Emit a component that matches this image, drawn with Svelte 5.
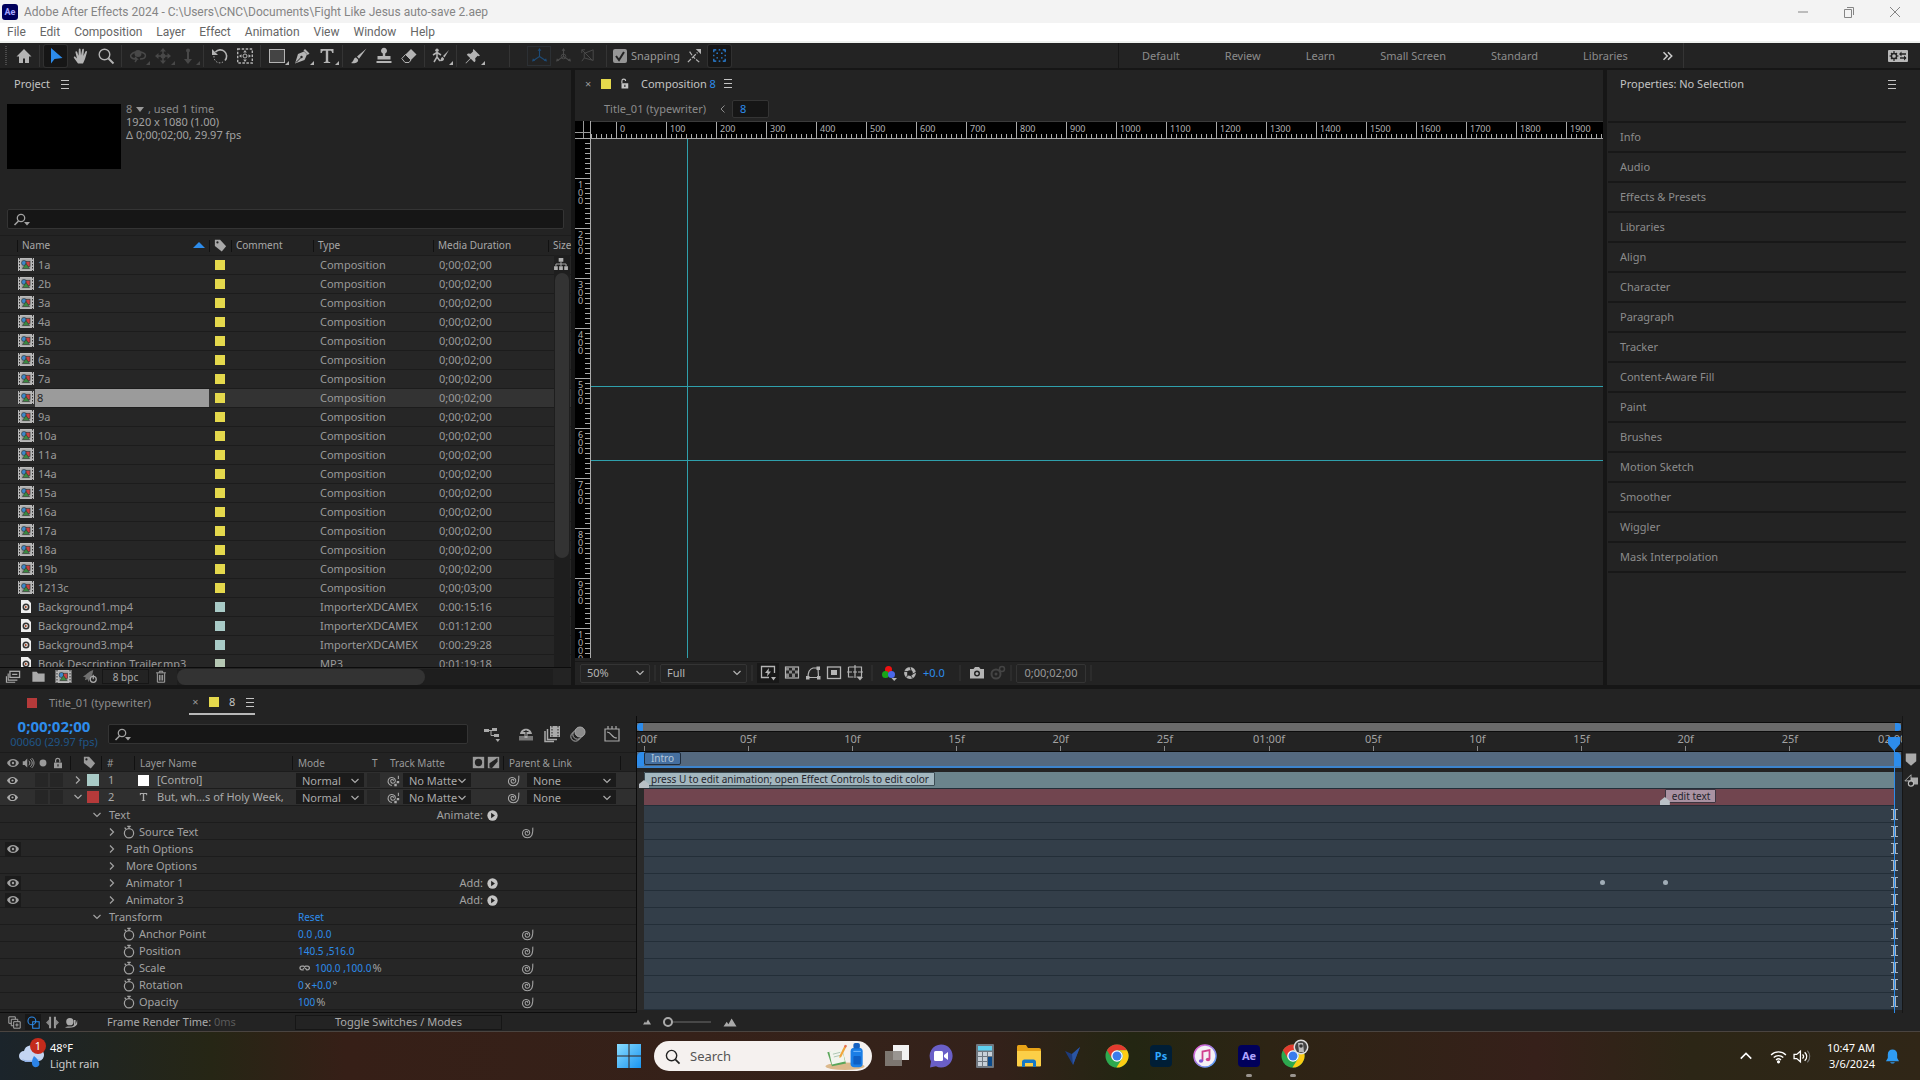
<script>
  const menus = ["File", "Edit", "Composition", "Layer", "Effect", "Animation", "View", "Window", "Help"];

  const toolGroups = [
    [{ id: "home" }],
    [{ id: "selection" }, { id: "hand" }, { id: "zoom" }],
    [
      { id: "orbit", off: true, more: true },
      { id: "pan", off: true, more: true },
      { id: "dolly", off: true, more: true },
    ],
    [{ id: "rotate" }, { id: "anchor" }],
    [{ id: "shape", more: true }, { id: "pen", more: true }, { id: "type", more: true }],
    [{ id: "brush" }, { id: "stamp" }, { id: "eraser" }],
    [{ id: "roto", more: true }],
    [{ id: "pin", more: true }],
  ];

  const workspaces = ["Default", "Review", "Learn", "Small Screen", "Standard", "Libraries"];

  const comp = (name, duration = "0;00;02;00") => ({ name, icon: "comp", label: "yellow", type: "Composition", duration });
  const clip = (name, duration) => ({ name, icon: "file", label: "aqua", type: "ImporterXDCAMEX", duration });

  const items = [
    comp("1a"), comp("2b"), comp("3a"), comp("4a"), comp("5b"), comp("6a"), comp("7a"), comp("8"), comp("9a"),
    comp("10a"), comp("11a"), comp("14a"), comp("15a"), comp("16a"), comp("17a"), comp("18a"), comp("19b"),
    comp("1213c", "0;00;03;00"),
    clip("Background1.mp4", "0:00:15:16"),
    clip("Background2.mp4", "0:01:12:00"),
    clip("Background3.mp4", "0:00:29:28"),
    { name: "Book Description Trailer.mp3", icon: "file", label: "sage", type: "MP3", duration: "0:01:19:18" },
  ];

  const rulerX = Array.from({ length: 20 }, (_, i) => i * 100);
  const rulerY = Array.from({ length: 10 }, (_, i) => (i + 1) * 100);

  const panels = [
    "Info", "Audio", "Effects & Presets", "Libraries", "Align", "Character", "Paragraph", "Tracker",
    "Content-Aware Fill", "Paint", "Brushes", "Motion Sketch", "Smoother", "Wiggler", "Mask Interpolation",
  ];

  const layers = [
    { num: 1, name: "[Control]", color: "aqua", kind: "solid" },
    { num: 2, name: "But, wh...s of Holy Week,", color: "red", kind: "text", open: true },
  ];

  const props = [
    { name: "Text", level: 0, arrow: "down", action: "Animate:" },
    { name: "Source Text", level: 1, arrow: "right", watch: true, whip: true },
    { name: "Path Options", level: 1, arrow: "right", eye: true },
    { name: "More Options", level: 1, arrow: "right" },
    { name: "Animator 1", level: 1, arrow: "right", eye: true, action: "Add:", keys: [46, 49] },
    { name: "Animator 3", level: 1, arrow: "right", eye: true, action: "Add:" },
    { name: "Transform", level: 0, arrow: "down", value: ["Reset"] },
    { name: "Anchor Point", level: 1, watch: true, whip: true, value: ["0.0 ,0.0"] },
    { name: "Position", level: 1, watch: true, whip: true, value: ["140.5 ,516.0"] },
    { name: "Scale", level: 1, watch: true, whip: true, link: true, value: ["100.0 ,100.0", "%"] },
    { name: "Rotation", level: 1, watch: true, whip: true, value: ["0", "x", "+0.0", "°"] },
    { name: "Opacity", level: 1, watch: true, whip: true, value: ["100", "%"] },
  ];

  const totalFrames = 60;
  const ticks = ["0:00f", "05f", "10f", "15f", "20f", "25f", "01:00f", "05f", "10f", "15f", "20f", "25f", "02:00f"];
  const at = (frame) => `left: ${(frame / totalFrames) * 100}%`;

  const apps = ["taskview", "chat", "calc", "explorer", "vectornator", "chrome", "ps", "itunes", "ae", "chromeUser"];
  const running = ["ae", "chromeUser"];

  const chromeLogo = `<circle cx="12" cy="12" r="11.5" fill="#2da94f"/><path d="M2 6.3A11.5 11.5 0 0 1 22 6.3H12L7 14.5Z" fill="#e33b2e"/><path d="M22 6.3A11.5 11.5 0 0 1 11.4 23.5L17 14.8A6 6 0 0 0 16 7.5L14 6.3Z" fill="#fdcc14"/><circle cx="12" cy="12" r="5.8" fill="#fff"/><circle cx="12" cy="12" r="4.5" fill="#3a7cec"/>`;

  const icons = {
    home: `<path d="M8 1 0.5 8.5H3V15h4v-4.5h2V15h4V8.5h2.5Z" fill="currentColor"/>`,
    selection: `<path d="M3 0v15.5l3.5-4.5 8-1Z" fill="#2d8ceb"/>`,
    hand: `<path d="M5 15.5 1 10c-.8-1.2.7-2 1.5-1L4 10.5 2.5 4.5c-.2-1.4 1.3-1.6 1.7-.4l1.3 3.6L5.8 1.5c.1-1.4 1.7-1.3 1.8 0l.4 6L9.2 1.6c.3-1.3 1.8-1 1.7.3l-.5 6 1.9-4.2c.6-1.2 2-.6 1.6.7L12 11l-2 4.5Z" fill="currentColor"/>`,
    zoom: `<circle cx="6.5" cy="6.5" r="5.3" fill="none" stroke="currentColor" stroke-width="1.4"/><path d="m10.5 10.5 5 5" stroke="currentColor" stroke-width="2"/>`,
    orbit: `<circle cx="8" cy="5.5" r="3.5" fill="currentColor"/><path d="M5 4C-2 7 0 11 7 11l-2-2m2 2-2 3M11 4c7 2 5 7-1 7" fill="none" stroke="currentColor" stroke-width="1.5"/>`,
    pan: `<path d="M8 1v14M1 8h14" stroke="currentColor" stroke-width="1.5"/><path d="m8 0 3 3.5H5ZM8 16l3-3.5H5ZM0 8l3.5-3v6ZM16 8l-3.5-3v6Z" fill="currentColor"/><circle cx="8" cy="8" r="2.5" fill="currentColor"/>`,
    dolly: `<path d="M8 1v12" stroke="currentColor" stroke-width="2"/><path d="m8 16 4-5H4Z" fill="currentColor"/><circle cx="8" cy="2.5" r="2" fill="currentColor"/>`,
    rotate: `<path d="M3.5 4a6.3 6.3 0 1 1 9.5 8.5" fill="none" stroke="currentColor" stroke-width="1.6"/><path d="M2 8a6 6 0 0 0 9 6" fill="none" stroke="currentColor" stroke-dasharray="1.5 1.5"/><path d="M0 1v6h6Z" fill="currentColor"/>`,
    anchor: `<rect x="0.7" y="1" width="14.6" height="14" fill="none" stroke="currentColor" stroke-width="1.4" stroke-dasharray="2.5 1.5"/><circle cx="8" cy="8" r="2" fill="none" stroke="currentColor"/><path d="m8 2 1.8 2.5H6.2ZM8 14l1.8-2.5H6.2ZM2 8l2.5-1.8v3.6ZM14 8l-2.5-1.8v3.6Z" fill="currentColor"/>`,
    shape: `<rect x="0.5" y="1.5" width="15" height="13" fill="#444" stroke="currentColor"/>`,
    pen: `<path d="M1 15.5 4 6l6-2.5 3 3L10.5 12Z" fill="currentColor"/><path d="m11 1 4.5 4.5-1.8 1.5L9.5 2.5Z" fill="currentColor"/><path d="m2 14.5 5-5" stroke="#232323"/><circle cx="7.5" cy="9" r="1.2" fill="#232323"/>`,
    type: `<path d="M1.5 1h13v4h-1.3c-.3-1.8-.8-2.3-2.2-2.3H9.2v10c0 1 .6 1.3 2 1.4v.9H4.8v-.9c1.4-.1 2-.4 2-1.4v-10H5c-1.4 0-1.9.5-2.2 2.3H1.5Z" fill="currentColor"/>`,
    brush: `<path d="M15.5.5 6 8.5l2 2.2ZM5 9.500C2 10 3.5 13 0 15c3.5 1 8-.5 7-3.5Z" fill="currentColor"/>`,
    stamp: `<path d="M6.8 8V5.5a3 3 0 1 1 2.4 0V8h5.3v3.5h-13V8ZM0.5 13h15v2H.5Z" fill="currentColor"/>`,
    eraser: `<path d="M10 1 15.5 6.5 10 12 4.5 6.5Z" fill="currentColor"/><path d="M4.5 6.5 10 12l-2 2.5H4L.8 10.5Z" fill="none" stroke="currentColor"/>`,
    roto: `<circle cx="4" cy="2.2" r="1.7" fill="currentColor"/><path d="M4 4v5L1 14M4 9l3 4M0 7l4-2.5L8 7" fill="none" stroke="currentColor" stroke-width="1.5"/><path d="M16 2 10 8l1.5 1.5ZM9.5 9c-2 .5-1 2.5-3 4 2.5.5 5-.5 4.5-2.5Z" fill="currentColor"/>`,
    pin: `<path d="M8.5 1 15 7.5l-1.5.7-.8-.4-2.5 2.5.3 2.7-1.2 1.2L5.8 10.7 1 15.5.5 15l4.8-4.8L1.8 6.7 3 5.5l2.7.3 2.5-2.5-.4-.8Z" fill="currentColor"/>`,
    axis: `<path d="M8 2v7l-6 4M8 9l6 4" fill="none" stroke="currentColor" stroke-width="1.2"/><path d="m8 0 2 3H6ZM0 14.5l1-3.5 2.5 2.5ZM16 14.5l-1-3.5-2.5 2.5Z" fill="currentColor"/>`,
    axisWorld: `<path d="M8 2v7l-6 4M8 9l6 4" fill="none" stroke="currentColor" stroke-width="1.2"/><circle cx="8" cy="9" r="2.5" fill="none" stroke="currentColor"/><path d="m8 0 2 3H6ZM0 14.5l1-3.5 2.5 2.5ZM16 14.5l-1-3.5-2.5 2.5Z" fill="currentColor"/>`,
    axisView: `<path d="M1 1l13 13M5 5l10-4v13L4 11V5M1 1v4M1 1h4M1 15l3-4" fill="none" stroke="currentColor" stroke-width="1.2"/>`,
    snapEdge: `<path d="m1 15 6-6 7 6M3 3l4 6 5-5" fill="none" stroke="currentColor" stroke-width="1.4" stroke-dasharray="5 1.5"/><path d="M10 0h6v6Z" fill="currentColor"/>`,
    snapBox: `<path d="M1 4V1h3M12 1h3v3M15 12v3h-3M4 15H1v-3M7 1h2M7 15h2M1 7v2M15 7v2M5 6V5h1M10 5h1v1M11 10v1h-1M6 11H5v-1" fill="none" stroke="#2d8ceb" stroke-width="1.4"/>`,
    chevrons: `<path d="m2 3 5 5-5 5M8 3l5 5-5 5" fill="none" stroke="#ccc" stroke-width="2"/>`,
    settings: `<rect width="20" height="12" rx="1" fill="#b8b8b8"/><circle cx="6" cy="6" r="2.6" fill="none" stroke="#232323" stroke-width="1.5"/><path d="M6 1v2M6 9v2M1.5 6h2M8.5 6h2M3 3l1 1M9 3 8 4M3 9l1-1M9 9 8 8" stroke="#232323" stroke-width="1.2"/><path d="M12 4h6M12 8h6" stroke="#232323" stroke-width="1.3"/><path d="m13.5 1.5-2.5 2.5 2.5 2.5ZM16 5.5 18.5 8 16 10.5Z" fill="#232323"/>`,
    menu: `<path d="M1 1.5h8M1 5.5h8M1 9.5h8" stroke="currentColor"/>`,
    search: `<circle cx="7" cy="5" r="3.7" fill="none" stroke="currentColor" stroke-width="1.3"/><path d="M4.5 8 0.5 12" stroke="currentColor" stroke-width="1.6"/><path d="M10 9h6l-3 3.5Z" fill="currentColor"/>`,
    tag: `<path d="M1 1h6l7 7.5L9 14.5 1 8Z" fill="currentColor"/><circle cx="4" cy="4" r="1.3" fill="#232323"/>`,
    sort: `<path d="M0 6 6 0l6 6Z" fill="#2d8ceb"/>`,
    flowchart: `<path d="M5 0h5v4H5ZM0 9h4v4H0ZM5.5 9h4v4h-4ZM11 9h4v4h-4Z" fill="currentColor"/><path d="M7.5 4v5M2 9V6.5h11V9" fill="none" stroke="currentColor"/>`,
    comp: `<rect width="16" height="13" fill="#b9b9b9"/><path d="M1.5 0v13M14.5 0v13" stroke="#333" stroke-dasharray="1.5 1.5"/><rect x="3.5" y="1.5" width="9" height="10" fill="#a0a0a0"/><circle cx="6" cy="5" r="2.5" fill="#3c87c8" stroke="#333" stroke-width=".6"/><rect x="8" y="3.5" width="4" height="5" fill="#c94141" stroke="#333" stroke-width=".6"/><path d="m8 5.5 3.5 5h-7Z" fill="#3c8a42" stroke="#333" stroke-width=".6"/>`,
    file: `<path d="M3 0h7l3 3v10H3Z" fill="#eee"/><circle cx="8" cy="7" r="2.7" fill="none" stroke="#333" stroke-width="1.6"/><path d="m7 5.5 2.5 1.5L7 8.5Z" fill="#a34b2a"/>`,
    interpret: `<rect x="4.5" y="1.5" width="11" height="7" fill="none" stroke="currentColor" stroke-width="1.5"/><path d="M2.5 4v7.5H13M.5 7v7h10M7 5h6" fill="none" stroke="currentColor" stroke-width="1.3"/>`,
    folder: `<path d="M1 2h5l1.5 2H15v9.5H1Z" fill="currentColor"/>`,
    rocket: `<path d="M12 1C6 3 5 6 1 8l3 1-1 3 3-1 1 3c1-4 4-5 5-13Z" fill="#707070"/><circle cx="12" cy="11" r="3.2" fill="none" stroke="#aaa" stroke-width="1.3"/><path d="M12 6v5" stroke="#aaa" stroke-width="1.3"/>`,
    trash: `<path d="M2 3.5h12M6 3V1.5h4V3M3.5 4v11h9V4M6 6v7M8 6v7M10 6v7" fill="none" stroke="currentColor" stroke-width="1.2"/>`,
    lock: `<path d="M3 7V4a2.7 2.7 0 0 1 5.3 0v3" fill="none" stroke="currentColor" stroke-width="1.5"/><path d="M1 7h10v7H1Z" fill="currentColor"/><path d="M6 9v3" stroke="#232323" stroke-width="1.5"/>`,
    unlock: `<path d="M2.5 7V4a2.5 2.5 0 0 1 5 0" fill="none" stroke="currentColor" stroke-width="1.5"/><path d="M2 7h9v7H2Z" fill="currentColor"/><path d="M6.5 9v3" stroke="#232323" stroke-width="1.5"/>`,
    back: `<path d="M5.5 1.5 2 5l3.5 3.5" fill="none" stroke="currentColor"/>`,
    down: `<path d="M1.5 3 5 6.5 8.5 3" fill="none" stroke="currentColor" stroke-width="1.2"/>`,
    right: `<path d="M3 1.5 6.5 5 3 8.5" fill="none" stroke="currentColor" stroke-width="1.2"/>`,
    fastPreview: `<path d="M14.5 8V1.5h-13v11H9" fill="none" stroke="currentColor" stroke-width="1.3"/><path d="M9 3 5 8h2.5L7 11.5l4-5H8.5ZM11 12h5l-2.5 3.5Z" fill="currentColor"/>`,
    checker: `<rect x="1.5" y="2" width="13" height="11" fill="none" stroke="currentColor" stroke-width="1.2"/><path d="M2 2.5h3v3H2Zm6 0h3v3H8Zm-3 3h3v3H5Zm6 0h3v3h-3Zm-9 3h3v4H2Zm6 0h3v4H8Z" fill="#888"/>`,
    maskPath: `<path d="M3 12.5h10.5L13 3H8C4 4 3 8 3 12.5Z" fill="none" stroke="currentColor" stroke-width="1.2"/><path d="M1 11h3.5v3.5H1ZM12 11h3.5v3.5H12ZM11.5 1.5H15V5h-3.5Z" fill="currentColor"/>`,
    region: `<rect x="1.5" y="2" width="13" height="11.5" fill="none" stroke="currentColor" stroke-width="1.3"/><path d="M5 5h6v5H5Z" fill="currentColor"/>`,
    gridGuides: `<path d="M1.5 2h13v10h-5M1.5 2v10h5M8 0v13M0 7h5M11 7h5M6 7h4" fill="none" stroke="currentColor" stroke-width="1.2"/><path d="M10 12h6l-3 3.5Z" fill="currentColor"/>`,
    channels: `<circle cx="7.5" cy="4.5" r="3.5" fill="#e11"/><circle cx="4.5" cy="9.5" r="3.5" fill="#19a519"/><circle cx="10.5" cy="9.5" r="3.5" fill="#4a67e8"/><path d="M10.5 13H16l-2.8 3Z" fill="currentColor"/>`,
    shutter: `<circle cx="8" cy="8" r="5" fill="none" stroke="currentColor" stroke-width="3.5"/><path d="m8 1 1.5 5M15 7l-4.5 2.5M11 14l-3-4M4 13l2-4.5M1 6l5 .5" stroke="#232323"/>`,
    camera: `<path d="M1 4h3.5L6 2h4l1.5 2H15v9.5H1Z" fill="currentColor"/><circle cx="8" cy="8.5" r="3" fill="#232323"/><circle cx="8" cy="8.5" r="1.5" fill="currentColor"/>`,
    cameraOff: `<circle cx="6" cy="9" r="4.5" fill="none" stroke="#444" stroke-width="2"/><circle cx="6" cy="9" r="1.5" fill="#444"/><circle cx="12" cy="4" r="2.5" fill="none" stroke="#444" stroke-width="1.5"/>`,
    miniFlow: `<path d="M0 3h5v3H0ZM8 2h5v3H8ZM10 8h5v3h-5Z" fill="currentColor"/><path d="M5 4.5h3M7 4.5v5h3" fill="none" stroke="currentColor"/><path d="M11.5 13H16l-2.2 3Z" fill="currentColor"/>`,
    shy: `<path d="M1 10h14v4.5H1Z" fill="#777"/><path d="M2 8C3 1 13 1 14 8H9.5v4h-3V8Z" fill="currentColor"/><path d="M5.5 5.5h5M8 4v6" stroke="#232323"/>`,
    frameBlend: `<path d="M6 0h10v11H6Z" fill="currentColor"/><path d="M3.5 3v10.5H13M1 5v10.5h9" fill="none" stroke="currentColor" stroke-width="1.5"/><path d="M8 0v11M14 0v11" stroke="#232323" stroke-dasharray="1.5 1.5"/>`,
    motionBlur: `<circle cx="5.5" cy="10.5" r="4.7" fill="none" stroke="currentColor"/><circle cx="7.5" cy="8.5" r="4.7" fill="#232323" stroke="currentColor"/><circle cx="10" cy="6" r="5" fill="#8c8c8c" stroke="currentColor"/>`,
    graph: `<path d="M1 3h14v12H1ZM4 3V0M8 3V0M12 3V0" fill="none" stroke="currentColor" stroke-width="1.2"/><path d="M3 6c5 0 4 6 10 6" fill="none" stroke="currentColor" stroke-width="1.2"/>`,
    eye: `<path d="M0 8c3-7 13-7 16 0-3 7-13 7-16 0Z" fill="currentColor"/><circle cx="8" cy="8" r="3.8" fill="#232323"/><circle cx="8" cy="8" r="1.6" fill="currentColor"/>`,
    speaker: `<path d="M1 5.5h2.5L7 2v12L3.5 10.5H1Z" fill="currentColor"/><path d="M9 5c2 2 2 4 0 6M11 3c3.5 3 3.5 7 0 10M13 1.5c4 4 4 9 0 13" fill="none" stroke="currentColor" stroke-width="1.3"/>`,
    dot: `<circle cx="8" cy="8" r="5.5" fill="currentColor"/>`,
    matteAlpha: `<path d="M1 1h14v14H1Z" fill="currentColor"/><circle cx="8" cy="8" r="4.5" fill="#232323"/>`,
    matteLuma: `<path d="M1 1h14v14H1Z" fill="currentColor"/><path d="M13 2v5L6 15l-3-1V9Z" fill="#232323"/>`,
    whip: `<path d="M7.8 8.5c1.5-1-.3-3-2-1.5s-.3 4.5 2 4.5 4-3 2.2-5.5S3.5 3.5 2.2 7s.8 7.5 5.6 7.5S15 11 14.5 2" fill="none" stroke="currentColor" stroke-width="1.3"/>`,
    whipMatte: `<path d="M7.3 8.5c1.5-1-.3-3-2-1.5s-.3 4.5 2 4.5 4-3 2.2-5.5S3 3.5 1.7 7s.8 6.5 4.3 7.2M14 2v4" fill="none" stroke="currentColor" stroke-width="1.3"/><path d="M9 12h3v3H9ZM12 8.5h3v3h-3Z" fill="currentColor"/>`,
    watch: `<circle cx="8" cy="9.5" r="5.3" fill="none" stroke="currentColor" stroke-width="1.4"/><path d="M6 1.5h4M8 1v3M3 3l1.5 1.5" stroke="currentColor" stroke-width="1.5"/>`,
    play: `<circle cx="8" cy="8" r="7.5" fill="#c4c4c4"/><path d="m6 4 5.5 4L6 12Z" fill="#232323"/>`,
    link: `<path d="M7 10.5H4.5a2.5 2.5 0 0 1 0-5H7l4 5h1a2.5 2.5 0 0 0 0-5H9.5L6 9" fill="none" stroke="currentColor" stroke-width="1.8"/>`,
    markerBin: `<path d="M2 1h12v9l-6 5-6-5Z" fill="#aaa"/>`,
    compButton: `<path d="M6 5h10v8H7Z" fill="#aaa"/><path d="m1 9 7-7v7Z" fill="#232323" stroke="#bbb"/><circle cx="8" cy="12" r="3" fill="#232323" stroke="#bbb" stroke-width="1.3"/>`,
    expand: `<path d="M1 1h8v3M1 1v8h3M4 4h8v3M4 4v8h3" fill="none" stroke="currentColor" stroke-width="1.2"/><path d="M7 7h8v8H7ZM9 11h4M11 9v4" fill="none" stroke="currentColor" stroke-width="1.2"/>`,
    modes: `<circle cx="6" cy="6" r="4.8" fill="none" stroke="#2d8ceb" stroke-width="1.3"/><path d="M7 7h8v8H7Z" fill="none" stroke="#2d8ceb" stroke-width="1.3"/>`,
    inout: `<path d="M5 1v14M11 1v14" stroke="#999" stroke-width="2.5"/><path d="m0 8 4-4v8ZM16 8l-4-4v8Z" fill="#888"/>`,
    snail: `<circle cx="6" cy="7" r="4.5" fill="#aaa"/><path d="M0 14c5-3 8 1 11-3V5h2v5l2-5v5c-2 4-8 5-15 4Z" fill="#aaa"/>`,
    hills: `<path d="m0 13 4-6 2 3 4-7 6 10Z" fill="currentColor"/>`,
    windows: `<defs><linearGradient id="w" x2="1" y2="1"><stop stop-color="#8adcff"/><stop offset="1" stop-color="#1a95f0"/></linearGradient></defs><path d="M0 0h11.5v11.5H0ZM12.5 0H24v11.5H12.5ZM0 12.5h11.5V24H0ZM12.5 12.5H24V24H12.5Z" fill="url(#w)"/>`,
    lens: `<circle cx="7" cy="7" r="5.5" fill="none" stroke="#222" stroke-width="1.5"/><path d="m11 11 4.5 4.5" stroke="#222" stroke-width="1.8"/>`,
    doodle: `<ellipse cx="22" cy="25" rx="21" ry="4" fill="#dcb98c"/><path d="m3 10 16-3 4 15-15 3Z" fill="#5aa65a"/><path d="m5 9 14-3 3 14-14 3Z" fill="#f2f5ee"/><path d="m9 12 8-2M10 15l8-2" stroke="#a9c4b0"/><path d="m22 2 2 1-6 12-2 1v-2Z" fill="#f0a63c"/><path d="m22 2 2 1-1 2-2-1Z" fill="#e36a5c"/><rect x="28" y="5" width="13" height="21" rx="4" fill="#1b7ee6"/><rect x="31" y="0" width="7" height="6" rx="2" fill="#1560c0"/><rect x="31" y="14" width="8" height="9" rx="1" fill="#0f5fc4"/><path d="M31 9h8" stroke="#7ec0ff"/>`,
    taskview: `<rect x="8" y="1" width="16" height="15" fill="#f2f2f2"/><rect x="0" y="7" width="17" height="15" fill="#8a8580" opacity=".85"/>`,
    chat: `<path d="M12 .5a11.5 11.5 0 1 1-5 21.8L1 23.5l1-6A11.5 11.5 0 0 1 12 .5Z" fill="#6a5fc7"/><rect x="5" y="7" width="9" height="10" rx="1.5" fill="#fff"/><path d="m15 11 4-3v8l-4-3Z" fill="#fff"/>`,
    calc: `<rect x="3" width="18" height="24" rx="1" fill="#6f7780"/><rect x="5" y="2" width="14" height="4.5" fill="#5fd0f0"/><path d="M5 8h4v4H5ZM10 8h4v4h-4ZM15 8h4v4h-4ZM5 13h4v4H5ZM10 13h4v4h-4ZM5 18h4v4H5ZM10 18h4v4h-4Z" fill="#c8d0d8"/><path d="M15 13h4v9h-4Z" fill="#0a4a8c"/>`,
    explorer: `<path d="M0 3c0-1.2.5-2 1.5-2H9l2 3h11c1.2 0 2 .8 2 2v16H0Z" fill="#e8a317"/><path d="M0 7h24v14c0 1-.5 1.5-1.5 1.5h-21C.5 22.5 0 22 0 21Z" fill="#fccf47"/><path d="M5 23v-5c0-1.5 1-2.5 2.5-2.5h9c1.5 0 2.5 1 2.5 2.5v5h-3v-4H8v4Z" fill="#1679c6"/>`,
    vectornator: `<path d="m4 7 7 3 8-7-7 18Z" fill="#1d3b7c"/><path d="m11 10 8-7-7 18Z" fill="#2a55a4"/>`,
    chrome: chromeLogo,
    chromeUser: `${chromeLogo}<circle cx="20" cy="3" r="7.5" fill="#ddd"/><circle cx="20" cy="3" r="6" fill="#444"/><path d="M17-1h5l1 9h-5Z" fill="#bbb"/><circle cx="20" cy="2" r="1.8" fill="#333"/>`,
    itunes: `<defs><linearGradient id="it" x2="1" y2="1"><stop stop-color="#f05ad0"/><stop offset="1" stop-color="#4aa8ff"/></linearGradient></defs><circle cx="12" cy="12" r="11" fill="#f4f0f6" stroke="url(#it)" stroke-width="1.5"/><path d="M9.5 17V7.5l7-1.5v9" fill="none" stroke="#d1428f" stroke-width="1.8"/><ellipse cx="8" cy="17" rx="2.2" ry="1.8" fill="#7b55d8"/><ellipse cx="15" cy="15.5" rx="2.2" ry="1.8" fill="#d1428f"/>`,
    weather: `<path d="M5 18a5 5 0 0 1 0-10 7 7 0 0 1 13-2 6 6 0 0 1 2 12Z" fill="#c3d5f2"/><path d="M3 16c4 2 12 2 18 0-2 2-4 3-6 3H6Z" fill="#8fb0e6"/><path d="M15 13c6 5 7 9 3 11-5 1-7-4-3-11Z" fill="#2b83e8"/>`,
    up: `<path d="m2 11 6-6 6 6" fill="none" stroke="#fff" stroke-width="1.8"/>`,
    wifi: `<path d="M1 6.5a10 10 0 0 1 14 0M3.5 9a6.5 6.5 0 0 1 9 0M5.7 11.3a3.3 3.3 0 0 1 4.6 0" fill="none" stroke="#fff" stroke-width="1.3"/><circle cx="8" cy="13" r="1.5" fill="#fff"/>`,
    volume: `<path d="M1 6h2.5L7 3v10l-3.5-3H1Z" fill="none" stroke="#fff" stroke-width="1.2"/><path d="M9 6c1.3 1.3 1.3 2.7 0 4M11 4c2.5 2.5 2.5 5.5 0 8" fill="none" stroke="#fff" stroke-width="1.2"/><path d="M13.5 2.5c3 3.5 3 7.5 0 11" fill="none" stroke="#777"/>`,
    bell: `<path d="M8 .5a5 5 0 0 1 5 5v4l2 3.5H1l2-3.5v-4a5 5 0 0 1 5-5ZM5.5 14h5c-.5 2-4.5 2-5 0Z" fill="#2f9bf2"/>`,
  };

  let tool = $state("selection");
  let snapping = $state(true);
  let workspace = $state("");
  let selected = $state("8");
</script>

{#snippet icon(name, w = 16, h = w, box = `0 0 16 16`)}
  <svg width={w} height={h} viewBox={box} aria-hidden="true">{@html icons[name]}</svg>
{/snippet}

{#snippet dropdown(kind, label, value)}
  <span class="dropdown {kind}">
    <select aria-label={label}><option>{value}</option></select>
    {@render icon("down", 10, 10, "0 0 10 10")}
  </span>
{/snippet}

<div class="app">
  <header class="titlebar">
    <span class="badge-ae">Ae</span>
    <span>Adobe After Effects 2024 - C:\Users\CNC\Documents\Fight Like Jesus auto-save 2.aep</span>
    <div class="window-buttons">
      <button aria-label="Minimize"><svg width="12" height="12"><path d="M1 6h10" /></svg></button>
      <button aria-label="Restore"><svg width="12" height="12"><path d="M1.5 3.5h7v8h-7ZM4 1.5h6.5V9" /></svg></button>
      <button aria-label="Close"><svg width="12" height="12"><path d="m1 1 10 10M11 1 1 11" /></svg></button>
    </div>
  </header>

  <nav class="menubar">
    {#each menus as menu}
      <button>{menu}</button>
    {/each}
  </nav>

  <div class="toolbar">
    <span class="grip"></span>
    {#each toolGroups as group, i}
      {#if i > 0}<span class="sep"></span>{/if}
      {#each group as t}
        <button
          class="tool"
          class:active={tool === t.id}
          class:off={t.off}
          class:more={t.more}
          aria-label={t.id}
          onclick={() => (tool = t.id)}
        >
          {@render icon(t.id)}
        </button>
      {/each}
    {/each}
    <span class="sep wide"></span>
    <div class="axes">
      <button class="axis on" aria-label="Local axis">{@render icon("axis", 15)}</button>
      <button class="axis" aria-label="World axis">{@render icon("axisWorld", 15)}</button>
      <button class="axis" aria-label="View axis">{@render icon("axisView", 13)}</button>
    </div>
    <span class="sep"></span>
    <label class="snapping"><input type="checkbox" bind:checked={snapping} />Snapping</label>
    <button class="tool" aria-label="Snap to edges">{@render icon("snapEdge", 14)}</button>
    <button class="tool active" aria-label="Snap to features">{@render icon("snapBox", 13)}</button>
    <nav class="workspaces">
      <div class="names">
        {#each workspaces as w}
          <button class:current={workspace === w} onclick={() => (workspace = w)}>{w}</button>
        {/each}
      </div>
      <button aria-label="More workspaces">{@render icon("chevrons", 12)}</button>
    </nav>
    <button class="settings" aria-label="Workspace settings">{@render icon("settings", 20, 12, "0 0 20 12")}</button>
  </div>

  <main class="panels">
    <section class="panel project">
      <div class="tab-row">Project <button aria-label="Panel menu">{@render icon("menu", 10, 11, "0 0 10 11")}</button></div>
      <div class="info">
        <div class="thumb"></div>
        <div>
          <p class="dim">8 <span class="caret"></span> , used 1 time</p>
          <p>1920 x 1080 (1.00)</p>
          <p>Δ 0;00;02;00, 29.97 fps</p>
        </div>
      </div>
      <div class="search">
        {@render icon("search", 16, 13, "0 0 16 13")}
        <input type="text" aria-label="Search project" />
      </div>
      <div class="list">
        <table>
          <thead>
            <tr>
              <th class="c-name"><span>Name {@render icon("sort", 12, 6, "0 0 12 6")}</span></th>
              <th class="c-label">{@render icon("tag", 13, 13, "0 0 15 15")}</th>
              <th class="c-comment">Comment</th>
              <th class="c-type">Type</th>
              <th class="c-duration">Media Duration</th>
              <th class="c-size">Size</th>
            </tr>
          </thead>
          <tbody>
            {#each items as item}
              <tr class:selected={selected === item.name} onclick={() => (selected = item.name)}>
                <td><span class="cell-name">{@render icon(item.icon, 16, 13, "0 0 16 13")}<b>{item.name}</b></span></td>
                <td><i class="swatch {item.label}"></i></td>
                <td></td>
                <td>{item.type}</td>
                <td>{item.duration}</td>
                <td></td>
              </tr>
            {/each}
          </tbody>
        </table>
        <div class="scroll-y">{@render icon("flowchart", 14, 12, "0 0 15 13")}<span></span></div>
      </div>
      <div class="project-foot">
        <button aria-label="Interpret footage">{@render icon("interpret", 18, 14)}</button>
        <button aria-label="New folder">{@render icon("folder", 15, 14)}</button>
        <button aria-label="New composition">{@render icon("comp", 17, 13, "0 0 16 13")}</button>
        <button aria-label="Proxies">{@render icon("rocket", 17, 15)}</button>
        <button class="bpc">8 bpc</button>
        <button aria-label="Delete">{@render icon("trash", 14, 13)}</button>
        <div class="scroll-x"><span></span></div>
      </div>
    </section>

    <section class="panel viewer">
      <div class="comp-tab">
        <span class="close">×</span>
        <i class="swatch yellow"></i>
        {@render icon("unlock", 12, 12)}
        <span>Composition <em>8</em></span>
        <button aria-label="Panel menu">{@render icon("menu", 10, 11, "0 0 10 11")}</button>
      </div>
      <div class="crumbs">
        <a href="#title">Title_01 (typewriter)</a>
        {@render icon("back", 8, 10, "0 0 8 10")}
        <a class="crumb-on" href="#comp">8</a>
      </div>
      <div class="stage">
        <div class="corner"></div>
        <div class="ruler-x">
          <span class="lead"></span>
          {#each rulerX as n}<span class="mark">{n}</span>{/each}
        </div>
        <div class="ruler-y">
          <span class="lead"></span>
          {#each rulerY as n}<span class="mark"><b>{n}</b></span>{/each}
        </div>
        <div class="canvas">
          <i class="guide-v"></i>
          <i class="guide-h first"></i>
          <i class="guide-h second"></i>
        </div>
      </div>
      <div class="viewer-foot">
        {@render dropdown("zoom", "Magnification", "50%")}
        <span class="sep"></span>
        {@render dropdown("res", "Resolution", "Full")}
        <span class="sep"></span>
        <button class="pressed" aria-label="Fast previews">{@render icon("fastPreview")}</button>
        <button aria-label="Transparency grid">{@render icon("checker")}</button>
        <button aria-label="Mask visibility">{@render icon("maskPath")}</button>
        <button aria-label="Region of interest">{@render icon("region")}</button>
        <button aria-label="Grid and guides">{@render icon("gridGuides")}</button>
        <span class="sep roomy"></span>
        <button aria-label="Channels">{@render icon("channels")}</button>
        <button aria-label="Reset exposure">{@render icon("shutter", 14)}</button>
        <button class="exposure">+0.0</button>
        <span class="sep roomy"></span>
        <button aria-label="Take snapshot">{@render icon("camera")}</button>
        <button aria-label="Show snapshot">{@render icon("cameraOff")}</button>
        <span class="sep"></span>
        <button class="time">0;00;02;00</button>
        <span class="sep"></span>
      </div>
    </section>

    <aside class="panel side">
      <div class="side-title">Properties: No Selection <button aria-label="Panel menu">{@render icon("menu", 10, 11, "0 0 10 11")}</button></div>
      {#each panels as p}
        <button class="side-item">{p}</button>
      {/each}
    </aside>
  </main>

  <section class="timeline">
    <div class="tl-tabs">
      <button class="tl-tab"><i class="swatch red"></i>Title_01 (typewriter)</button>
      <button class="tl-tab on"><span class="close">×</span><i class="swatch yellow"></i>8 {@render icon("menu", 10, 11, "0 0 10 11")}</button>
    </div>

    <div class="tl-body">
      <div class="tl-left">
        <div class="controls">
          <div class="clock"><strong>0;00;02;00</strong><span>00060 (29.97 fps)</span></div>
          <div class="search">
            {@render icon("search", 16, 13, "0 0 16 13")}
            <input type="text" aria-label="Search layers" />
          </div>
          <div class="switches">
            {#each ["miniFlow", "shy", "frameBlend", "motionBlur", "graph"] as name}
              <button class={name} aria-label={name}>{@render icon(name)}</button>
            {/each}
          </div>
        </div>

        <div class="grid head">
          <span class="av">{@render icon("eye", 12)}</span>
          <span class="av">{@render icon("speaker", 12)}</span>
          <span class="av">{@render icon("dot", 10)}</span>
          <span class="av">{@render icon("lock", 10, 12, "0 0 12 15")}</span>
          <span class="tagcell">{@render icon("tag", 13, 13, "0 0 15 15")}</span>
          <span>#</span>
          <span>Layer Name</span>
          <span>Mode</span>
          <span class="plain">T</span>
          <span class="matte">Track Matte<i>{@render icon("matteAlpha", 13)}{@render icon("matteLuma", 13)}</i></span>
          <span>Parent &amp; Link</span>
          <span></span>
        </div>

        {#each layers as layer}
          <div class="grid layer">
            <span class="av">{@render icon("eye", 11)}</span>
            <span></span>
            <span class="box"></span>
            <span class="box"></span>
            <span class="fold">{@render icon(layer.open ? "down" : "right", 10, 10, "0 0 10 10")}<i class="chip {layer.color}"></i></span>
            <span class="num">{layer.num}</span>
            <span class="lname">
              {#if layer.kind === "solid"}<i class="solid"></i>{:else}{@render icon("type", 9, 10)}{/if}
              {layer.name}
            </span>
            <span class="modecell">{@render dropdown("mode", "Mode", "Normal")}</span>
            <span class="box"></span>
            <span class="whipcell">{@render icon("whipMatte", 13)}{@render dropdown("mode", "Track matte", "No Matte")}</span>
            <span class="whipcell link">{@render icon("whip", 13)}{@render dropdown("parent", "Parent", "None")}</span>
            <span></span>
          </div>
        {/each}

        {#each props as p}
          <div class="grid prop">
            <span class="av" class:lit={p.eye}>{#if p.eye}{@render icon("eye", 12)}{/if}</span>
            <span class="label level{p.level}" class:bare={!p.watch}>
              <i class="twirl">{#if p.arrow}{@render icon(p.arrow, 10, 10, "0 0 10 10")}{/if}</i>
              {#if p.watch}{@render icon("watch", 14)}{/if}
              {p.name}
            </span>
            <span class="values">
              {#if p.link}{@render icon("link", 13, 12)}{/if}
              {#each p.value ?? [] as v}
                {#if v === "%" || v === "x" || v === "°"}<i>{v}</i>{:else}<button>{v}</button>{/if}
              {/each}
              {#if p.action}<span class="action">{p.action}{@render icon("play", 11)}</span>{/if}
            </span>
            <span class="propwhip">{#if p.whip}{@render icon("whip", 13)}{/if}</span>
          </div>
        {/each}
      </div>

      <div class="tl-right">
        <div class="nav"><i></i><i></i></div>
        <div class="times">
          <div class="times-in">
            {#each ticks as t}<span>{t}</span>{/each}
          </div>
        </div>
        <div class="work">
          <i class="grab"></i>
          <span>Intro</span>
          <i class="grab end"></i>
        </div>
        <div class="lane">
          <div class="bar aqua-bar">
            <i class="note-pin" style={at(0)}></i>
            <span class="note pale" style={at(0)}>press U to edit animation; open Effect Controls to edit color</span>
          </div>
        </div>
        <div class="lane">
          <div class="bar red-bar">
            <i class="note-pin" style={at(49)}></i>
            <span class="note" style={at(49)}>edit text</span>
          </div>
        </div>
        {#each props as p}
          <div class="lane">
            <div class="bar blue-bar">
              {#each p.keys ?? [] as k}<i class="key" style={at(k)}></i>{/each}
              <svg class="beam" width="7" height="13"><path d="M0 1.5h3M4 1.5h3M0 11.5h3M4 11.5h3M2.5 2v9M4.5 2v9" /></svg>
            </div>
          </div>
        {/each}
        <div class="playhead"><svg width="12" height="14"><path d="M0 0h12v7l-6 7-6-7Z" /></svg></div>
      </div>

      <div class="tl-side">
        {@render icon("markerBin", 14, 15)}
        {@render icon("compButton", 14, 14)}
      </div>
    </div>

    <div class="tl-foot">
      <div class="foot-icons">
        {#each ["expand", "modes", "inout", "snail"] as name}
          <button class:pressed={name === "modes"} aria-label={name}>{@render icon(name, 13)}</button>
        {/each}
      </div>
      <span class="render">Frame Render Time: <i>0ms</i></span>
      <button class="toggle">Toggle Switches / Modes</button>
      <div class="zoomer">
        {@render icon("hills", 10, 8)}
        <input type="range" min="0" max="100" value="0" aria-label="Timeline zoom" />
        {@render icon("hills", 16, 13)}
      </div>
    </div>
  </section>

  <footer class="taskbar">
    <button class="weather">
      <span class="cloud">{@render icon("weather", 26, 26, "0 0 26 26")}<b>1</b></span>
      <span>48°F<br /><i>Light rain</i></span>
    </button>
    <div class="dock">
      <button aria-label="Start">{@render icon("windows", 24, 24, "0 0 24 24")}</button>
      <label class="find">
        {@render icon("lens", 15)}
        <input type="text" placeholder="Search" />
        {@render icon("doodle", 42, 27, "0 0 44 29")}
      </label>
      <div class="apps">
        {#each apps as app}
          <button class="app-icon" class:running={running.includes(app)} aria-label={app}>
            {#if app === "ps"}
              <span class="tile ps">Ps</span>
            {:else if app === "ae"}
              <span class="tile ae">Ae</span>
            {:else}
              {@render icon(app, 24, 24, "0 0 24 24")}
            {/if}
          </button>
        {/each}
      </div>
    </div>
    <div class="tray">
      {@render icon("up", 14)}
      <span class="net">{@render icon("wifi", 17)}{@render icon("volume", 17)}</span>
      <span class="clock-bell">
        <time>10:47 AM<br />3/6/2024</time>
        {@render icon("bell", 15, 17)}
      </span>
    </div>
  </footer>
</div>

<style>
  :global(body) {
    background: #161616;
  }

  .app {
    display: flex;
    flex-direction: column;
    height: 100vh;
    overflow: hidden;
    font: 11px/16px "Noto Sans", "Open Sans", sans-serif;
    color: #a2a2a2;
    background: #161616;
  }

  .app :global(svg) {
    display: block;
    flex: none;
    overflow: visible;
  }

  button,
  select,
  input {
    font: inherit;
    color: inherit;
    background: none;
    border: 0;
    padding: 0;
    margin: 0;
    outline: none;
  }

  button {
    display: flex;
    align-items: center;
    justify-content: center;
    white-space: nowrap;
  }

  i,
  em {
    font-style: normal;
  }

  b {
    font-weight: normal;
  }

  p {
    margin: 0;
  }

  /* title and menus */
  .titlebar,
  .menubar {
    font-family: Roboto, "Noto Sans", sans-serif;
    font-size: 12px;
  }

  .titlebar {
    display: flex;
    align-items: center;
    height: 23px;
    flex: none;
    background: #f3f3f3;
    color: #858585;
  }

  .badge-ae {
    width: 16px;
    height: 16px;
    margin: 0 6px 0 2px;
    border-radius: 3px;
    background: #00005b;
    color: #a5a5ff;
    font-size: 9px;
    font-weight: bold;
    text-align: center;
  }

  .window-buttons {
    display: flex;
    margin-left: auto;
  }

  .window-buttons button {
    width: 46px;
    height: 20px;
  }

  .window-buttons path {
    fill: none;
    stroke: #858585;
  }

  .window-buttons button:last-child {
    margin-right: 2px;
  }

  .menubar {
    display: flex;
    align-items: center;
    gap: 14px;
    height: 18px;
    flex: none;
    padding-left: 7px;
    background: #fff;
    border-bottom: 2px solid #eef1ee;
    color: #666;
  }

  /* toolbar */
  .toolbar {
    display: flex;
    align-items: center;
    height: 25px;
    flex: none;
    background: #232323;
    margin-bottom: 2px;
    color: #b4b4b4;
  }

  .grip {
    width: 2px;
    height: 20px;
    margin: 0 4px 0 5px;
    background: repeating-linear-gradient(#4a4a4a 0 1px, #232323 1px 2px);
  }

  .tool {
    position: relative;
    width: 25px;
    height: 24px;
  }

  .tool.active {
    width: 23px;
    height: 22px;
    margin: 0 1px;
    background: #161616;
    border-radius: 2px;
    box-shadow: 0 0 0 1px #303030;
  }

  .tool.off {
    color: #484848;
  }

  .tool.more::after {
    content: "";
    position: absolute;
    right: 0;
    bottom: 3px;
    border: 2px solid transparent;
    border-right-color: currentColor;
    border-bottom-color: currentColor;
  }

  .sep {
    flex: none;
    width: 1px;
    height: 22px;
    margin: 0 3px;
    background: #343434;
  }

  .sep.wide {
    margin: 0 17px 0 24px;
  }

  .axes {
    display: flex;
    margin-right: 4px;
  }

  .axis {
    width: 24px;
    height: 20px;
    color: #4a4a4a;
  }

  .axis.on {
    color: #1d4b77;
    box-shadow: inset 0 0 0 1px #2c3034;
  }

  .snapping {
    display: flex;
    align-items: center;
    gap: 4px;
    margin: 0 2px 0 3px;
    color: #989898;
  }

  .snapping input {
    appearance: none;
    width: 14px;
    height: 14px;
    border-radius: 2px;
    background: #3c3c3c;
  }

  .snapping input:checked {
    background: #959595
      url("data:image/svg+xml,%3Csvg xmlns='http://www.w3.org/2000/svg' width='14' height='14'%3E%3Cpath d='m3 7 3 4 5-8' fill='none' stroke='%23222' stroke-width='2'/%3E%3C/svg%3E");
  }

  .workspaces {
    display: flex;
    align-items: center;
    justify-content: space-between;
    box-sizing: border-box;
    width: 566px;
    height: 25px;
    margin-left: auto;
    margin-right: 204px;
    padding: 0 9px 0 23px;
    border-left: 1px solid #161616;
    border-right: 1px solid #343434;
    color: #8c8c8c;
  }

  .names {
    display: flex;
    gap: 45px;
  }

  .workspaces .current {
    color: #2d8ceb;
  }

  .settings {
    margin-right: 12px;
  }

  /* panels */
  .panels {
    flex: 1;
    min-height: 0;
    display: grid;
    grid-template-columns: 571px minmax(0, 1fr) 313px;
    gap: 4px;
    margin-bottom: 4px;
  }

  .panel {
    display: flex;
    flex-direction: column;
    min-height: 0;
    background: #232323;
    overflow: hidden;
  }

  .swatch {
    display: inline-block;
    width: 10px;
    height: 10px;
  }

  .yellow {
    background: #e4d84c;
  }

  .aqua {
    background: #a9cbc7;
  }

  .sage {
    background: #b5c7b3;
  }

  .red {
    background: #b53a3a;
  }

  .tab-row {
    display: flex;
    align-items: center;
    gap: 10px;
    height: 28px;
    padding-left: 14px;
    color: #c4c4c4;
  }

  .info {
    display: flex;
    gap: 5px;
    height: 107px;
    padding: 4px 0 0 7px;
    line-height: 13px;
  }

  .thumb {
    width: 114px;
    height: 65px;
    margin-top: 2px;
    background: #000;
  }

  .info .dim {
    color: #8a8a8a;
  }

  .caret {
    display: inline-block;
    border: 4px solid transparent;
    border-top: 5px solid #999;
    border-bottom: 0;
    margin: 0 1px 1px;
  }

  .search {
    display: flex;
    align-items: center;
    box-sizing: border-box;
    height: 20px;
    padding-left: 6px;
    background: #161616;
    border: 1px solid #343434;
    border-radius: 2px;
  }

  .search input {
    flex: 1;
  }

  .project .search {
    flex: none;
    margin: 0 7px 6px;
  }

  .list {
    display: flex;
    flex: 1;
    min-height: 0;
    overflow: hidden;
    border-top: 1px solid #1c1c1c;
    border-bottom: 1px solid #0c0c0c;
    position: relative;
  }

  table {
    flex: none;
    width: 571px;
    height: max-content;
    table-layout: fixed;
    border-collapse: collapse;
  }

  th {
    height: 19px;
    padding: 0 0 0 5px;
    font-size: 10px;
    font-weight: normal;
    text-align: left;
    color: #a8a8a8;
    border-bottom: 1px solid #1c1c1c;
    background: linear-gradient(#111, #111) 0 4px / 1px 12px no-repeat;
    white-space: nowrap;
    box-sizing: border-box;
  }

  .c-name {
    width: 209px;
    padding-left: 22px;
    background-position: 17px 4px;
  }

  .c-name span {
    display: flex;
    align-items: center;
    justify-content: space-between;
    padding-right: 4px;
  }

  .c-label {
    width: 22px;
  }

  .c-comment {
    width: 82px;
  }

  .c-type {
    width: 120px;
  }

  .c-duration {
    width: 115px;
  }

  td {
    height: 19px;
    padding: 0 0 0 7px;
    box-sizing: border-box;
    line-height: 16px;
    border-bottom: 1px solid #1c1c1c;
    background: #262626;
    color: #9a9a9a;
    white-space: nowrap;
  }

  td:nth-child(1) {
    padding-left: 18px;
  }

  td:nth-child(2),
  td:nth-child(5) {
    padding-left: 6px;
  }

  td .swatch {
    display: block;
  }

  .cell-name {
    display: flex;
    align-items: center;
    gap: 1px;
  }

  .cell-name b {
    flex: 1;
    height: 18px;
    padding-left: 3px;
    line-height: 18px;
  }

  .selected td {
    background: #333;
  }

  .selected b {
    background: #9b9b9b;
    color: #232323;
    padding-left: 2px;
  }

  .scroll-y {
    position: absolute;
    top: 19px;
    right: 1px;
    bottom: 0;
    width: 16px;
    padding-top: 3px;
    background: #1e1e1e;
    color: #b0b0b0;
  }

  .scroll-y span {
    display: block;
    height: 285px;
    margin: 3px 1px 0;
    border-radius: 7px;
    background: #333;
  }

  .project-foot {
    display: flex;
    align-items: center;
    flex: none;
    height: 17px;
    gap: 9px;
    padding-left: 4px;
    color: #aaa;
  }

  .bpc {
    width: 47px;
    height: 15px;
    border: 1px solid #161616;
    box-sizing: border-box;
    margin: 0 -4px 0 -5px;
    font-size: 10px;
  }

  .scroll-x {
    flex: 1;
    margin-right: 18px;
    background: #1e1e1e;
  }

  .scroll-x span {
    display: block;
    width: 66%;
    height: 16px;
    border-radius: 8px;
    background: #333;
  }

  /* viewer */
  .comp-tab {
    display: flex;
    align-items: center;
    gap: 9px;
    height: 27px;
    flex: none;
    padding-left: 10px;
    color: #c4c4c4;
  }

  .comp-tab em {
    color: #2d8ceb;
  }

  .comp-tab button {
    margin-left: -2px;
  }

  .close {
    width: 7px;
    color: #999;
  }

  .crumbs {
    display: flex;
    align-items: center;
    gap: 13px;
    height: 24px;
    flex: none;
    padding-left: 29px;
    color: #8c8c8c;
  }

  .crumbs a {
    color: inherit;
    text-decoration: none;
  }

  .crumbs .crumb-on {
    width: 28px;
    height: 16px;
    margin-left: -8px;
    padding-left: 7px;
    background: #161616;
    border: 1px solid #343434;
    border-radius: 2px;
    color: #2d8ceb;
  }

  .stage {
    flex: 1;
    min-height: 0;
    display: grid;
    grid-template: 18px minmax(0, 1fr) / 16px minmax(0, 1fr);
    margin-bottom: 3px;
  }

  .corner {
    background:
      linear-gradient(#999, #999) 8px 0 / 1px 100% no-repeat,
      linear-gradient(#999, #999) 0 11px / 100% 1px no-repeat,
      #000;
    border-right: 1px solid #aaa;
    border-bottom: 1px solid #aaa;
  }

  .ruler-x,
  .ruler-y {
    display: flex;
    overflow: hidden;
    font-size: 9px;
    color: #b0b0b0;
    background: #000;
  }

  .ruler-x {
    border-top: 1px solid #3a3a3a;
    border-bottom: 1px solid #aaa;
  }

  .ruler-x span {
    flex: none;
    box-sizing: border-box;
    width: 50px;
    padding-left: 3px;
    line-height: 14px;
    background: repeating-linear-gradient(90deg, #aaa 0 1px, transparent 1px 5px) 0 100% / 100% 4px no-repeat;
  }

  .ruler-x .mark {
    border-left: 1px solid #aaa;
    background-origin: border-box;
  }

  .ruler-x .mark:last-child {
    flex: 1 0 0;
  }

  .ruler-x .lead {
    width: 25px;
  }

  .ruler-y {
    flex-direction: column;
    border-right: 1px solid #aaa;
  }

  .ruler-y span {
    flex: none;
    box-sizing: border-box;
    height: 50px;
    padding: 2px 0 0 3px;
    line-height: 8px;
    background: repeating-linear-gradient(#aaa 0 1px, transparent 1px 5px) 100% 0 / 5px 100% no-repeat;
  }

  .ruler-y .lead {
    height: 39px;
    background-position: 100% -1px;
  }

  .ruler-y .mark {
    border-top: 1px solid #aaa;
    background-origin: border-box;
  }

  .ruler-y b {
    display: block;
    width: 6px;
    word-break: break-all;
  }

  .canvas {
    position: relative;
    overflow: hidden;
  }

  .guide-v,
  .guide-h {
    position: absolute;
    background: #2fa0ac;
  }

  .guide-v {
    left: 96px;
    top: 0;
    bottom: 0;
    width: 1px;
  }

  .guide-h {
    left: 0;
    right: 0;
    height: 1px;
  }

  .guide-h.first {
    top: 247px;
  }

  .guide-h.second {
    top: 321px;
  }

  .viewer-foot {
    display: flex;
    align-items: center;
    gap: 5px;
    height: 22px;
    flex: none;
    padding: 0 0 1px 5px;
    border-top: 1px solid #181818;
    color: #b4b4b4;
  }

  .viewer-foot .sep {
    width: 2px;
    height: 16px;
    margin: 0 -1px;
    background: #2c2c2c;
  }

  .viewer-foot .sep.roomy {
    margin: 0 3px;
  }

  .viewer-foot button {
    min-width: 16px;
  }

  .viewer-foot .pressed {
    width: 22px;
    height: 20px;
    background: #181818;
  }

  .viewer-foot .exposure {
    width: 28px;
    justify-content: flex-start;
    color: #2d8ceb;
  }

  .viewer-foot .time {
    width: 70px;
    height: 19px;
    box-sizing: border-box;
    border: 1px solid #343434;
    border-radius: 2px;
    color: #999;
  }

  .dropdown {
    display: grid;
    align-items: center;
    justify-items: end;
    box-sizing: border-box;
  }

  .dropdown > select,
  .dropdown > :global(svg) {
    grid-area: 1 / 1;
  }

  .dropdown select {
    appearance: none;
    width: 100%;
    height: 100%;
    padding: 0 12px 0 6px;
  }

  .dropdown > :global(svg) {
    margin-right: 4px;
    pointer-events: none;
  }

  .dropdown.zoom,
  .dropdown.res {
    height: 19px;
    border: 1px solid #343434;
    border-radius: 2px;
  }

  .dropdown.zoom {
    width: 70px;
  }

  .dropdown.res {
    width: 87px;
  }

  .dropdown.mode,
  .dropdown.parent {
    width: 68px;
    height: 14px;
    background: #1b1b1b;
    overflow: hidden;
  }

  .dropdown.parent {
    width: 89px;
  }

  /* right column */
  .side-title {
    display: flex;
    justify-content: space-between;
    align-items: center;
    height: 28px;
    padding: 0 23px 23px 13px;
    color: #c4c4c4;
  }

  .side-item {
    justify-content: flex-start;
    height: 30px;
    flex: none;
    margin: 0 14px 0 1px;
    padding-left: 12px;
    border-top: 2px solid #181818;
    box-sizing: border-box;
    color: #8c8c8c;
  }

  .side-item:last-child {
    height: 32px;
    border-bottom: 2px solid #181818;
  }

  /* timeline */
  .timeline {
    flex: none;
    background: #232323;
  }

  .tl-tabs {
    display: flex;
    gap: 38px;
    height: 27px;
    padding-left: 27px;
  }

  .tl-tab {
    height: 26px;
    gap: 12px;
    padding-top: 2px;
    box-sizing: border-box;
    color: #8c8c8c;
  }

  .tl-tab.on {
    padding-left: 3px;
    gap: 10px;
    color: #c4c4c4;
    border-bottom: 2px solid #b8b8b8;
  }

  .tl-body {
    display: grid;
    grid-template-columns: 637px minmax(0, 1fr) 18px;
    height: 297px;
    overflow: hidden;
  }

  .tl-left {
    border-right: 1px solid #0c0c0c;
    border-bottom: 1px solid #0c0c0c;
  }

  .controls {
    display: flex;
    align-items: center;
    height: 37px;
    box-sizing: border-box;
    padding: 0 15px 0 0;
    border-bottom: 1px solid #1b1b1b;
  }

  .clock {
    width: 108px;
    text-align: center;
    line-height: 15px;
    color: #1f5587;
  }

  .clock strong {
    display: block;
    font-size: 15px;
    color: #2d8ceb;
  }

  .controls .search {
    width: 360px;
    margin-right: 1px;
  }

  .switches {
    display: flex;
    flex: 1;
    gap: 10px;
    padding-left: 15px;
    color: #aaa;
  }

  .switches .miniFlow {
    margin-right: 8px;
  }

  .switches .graph {
    margin-left: 8px;
  }

  .grid {
    display: grid;
    grid-template-columns: 15px 15px 15px 15px 36px 33px 158px 75px 16px 120px 117px 1fr;
    align-items: center;
    height: 17px;
    box-sizing: border-box;
    padding-left: 5px;
    border-bottom: 1px solid #1c1c1c;
    white-space: nowrap;
  }

  .grid.head {
    height: 19px;
    padding-top: 1px;
    font-size: 10px;
    color: #9a9a9a;
  }

  .head > span {
    height: 14px;
    line-height: 14px;
    padding-left: 5px;
    border-left: 1px solid #111;
  }

  .head > .av,
  .head > .plain {
    border: 0;
  }

  .av {
    display: flex;
    justify-content: center;
    align-items: center;
  }

  .head > .av {
    padding: 0;
  }

  .head .tagcell {
    padding-left: 12px;
    margin-left: 5px;
  }

  .head > .matte {
    display: flex;
    justify-content: space-between;
    padding: 0 3px 0 7px;
    border: 0;
  }

  .matte i {
    display: flex;
    align-items: center;
    gap: 2px;
  }

  .layer {
    background: #2f2f2f;
    color: #aaa;
  }

  .box {
    width: 13px;
    height: 14px;
    background: #262626;
  }

  .layer .fold {
    display: flex;
    align-items: center;
    justify-content: space-between;
    padding: 0 2px 0 8px;
  }

  .chip {
    width: 12px;
    height: 12px;
  }

  .num {
    padding-left: 7px;
  }

  .lname {
    display: flex;
    align-items: center;
    gap: 8px;
    padding-left: 4px;
  }

  .lname > :global(svg) {
    margin: 0 1px;
  }

  .solid {
    width: 11px;
    height: 11px;
    background: #fff;
  }

  .modecell {
    padding-left: 4px;
  }

  .whipcell {
    display: flex;
    align-items: center;
    gap: 3px;
    padding-left: 4px;
  }

  .whipcell.link {
    gap: 7px;
  }

  .prop {
    grid-template-columns: 61px 226px 211px 1fr;
    padding-top: 1px;
    background: #262626;
  }

  .prop .av {
    width: 16px;
    height: 15px;
  }

  .prop .lit {
    background: #1b1b1b;
  }

  .label {
    display: flex;
    align-items: center;
    gap: 5px;
  }

  .twirl {
    width: 12px;
  }

  .level0 {
    padding-left: 26px;
  }

  .level1 {
    padding-left: 41px;
    gap: 3px;
  }

  .level1.bare {
    gap: 7px;
  }

  .values {
    display: flex;
    align-items: center;
    gap: 1px;
    padding: 0 5px 0 6px;
  }

  .values > :global(svg) {
    margin-right: 3px;
  }

  .values button {
    color: #2d8ceb;
    line-height: 14px;
    font-size: 10px;
  }

  .action {
    display: flex;
    align-items: center;
    gap: 4px;
    margin-left: auto;
  }

  .propwhip {
    padding-left: 18px;
  }

  .tl-right {
    position: relative;
    padding-top: 6px;
    overflow: hidden;
  }

  .nav {
    display: flex;
    justify-content: space-between;
    height: 8px;
    margin-right: 1px;
    border-top: 1px solid #0c0c0c;
    border-bottom: 1px solid #0c0c0c;
    background: #6a6a6a;
  }

  .nav i {
    width: 6px;
    background: #2d8ceb;
    border-radius: 5px 0 0 5px;
  }

  .nav i:last-child {
    border-radius: 0 5px 5px 0;
  }

  .times {
    height: 19px;
    padding: 0 8px 0 7px;
    border-bottom: 1px solid #0c0c0c;
    overflow: hidden;
  }

  /* one extra half cell at each end centres every label on its tick */
  .times-in {
    display: flex;
    height: 19px;
    margin: 0 calc(-100% / 24);
  }

  .times span {
    flex: 1 1 0;
    text-align: center;
    line-height: 14px;
    background: linear-gradient(#888, #888) 50% 100% / 1px 5px no-repeat;
  }

  .work {
    display: flex;
    height: 14px;
    margin-right: 1px;
    border-bottom: 2px solid #3d84cc;
    background: #54697f;
  }

  .work span {
    box-sizing: border-box;
    width: 37px;
    height: 13px;
    border: 1px solid #1e2c3c;
    border-radius: 2px;
    background: #456f9f;
    color: #b5c6d8;
    line-height: 11px;
    text-align: center;
    font-size: 10px;
  }

  .grab {
    width: 7px;
    border-radius: 5px 0 0 0;
    background: #2d8ceb;
  }

  .grab.end {
    margin-left: auto;
    border-radius: 0 5px 0 0;
  }

  .work + .lane {
    margin-top: 4px;
  }

  .lane {
    height: 17px;
    padding: 0 8px 0 7px;
    background: linear-gradient(#2c3743, #2c3743) 100% 0 / 8px 100% no-repeat #2a2a2a;
  }

  .bar {
    position: relative;
    height: 16px;
    border-bottom: 1px solid #232e38;
  }

  .aqua-bar {
    background: #6b848c;
  }

  .red-bar {
    background: #71454f;
  }

  .blue-bar {
    background: #333e49;
  }

  .note {
    position: absolute;
    top: 0;
    height: 12px;
    padding: 0 5px 0 6px;
    border: 1px solid #3d3540;
    border-radius: 1px;
    background: #a992a2;
    color: #24242c;
    line-height: 12px;
    white-space: nowrap;
    font-size: 10px;
  }

  .note.pale {
    background: #a3b7bf;
    border-color: #3c4c54;
  }

  .note-pin {
    position: absolute;
    bottom: 0;
    z-index: 1;
    width: 10px;
    height: 8px;
    margin-left: -5px;
    background: #b9c0c6;
    clip-path: polygon(50% 0, 100% 50%, 100% 100%, 0 100%, 0 50%);
  }

  .key {
    position: absolute;
    top: 6px;
    width: 5px;
    height: 5px;
    margin-left: -2px;
    border-radius: 3px;
    background: #a0acb6;
  }

  .beam {
    position: absolute;
    top: 2px;
    right: -4px;
    stroke: #a9b6c2;
    fill: none;
  }

  .playhead {
    position: absolute;
    top: 21px;
    bottom: 0;
    right: 2px;
    width: 12px;
    background: linear-gradient(#2d8ceb, #2d8ceb) 6px 0 / 1px 100% no-repeat;
  }

  .playhead path {
    fill: #2d8ceb;
  }

  .tl-side {
    display: flex;
    flex-direction: column;
    gap: 6px;
    padding: 36px 0 0 1px;
    border-left: 1px solid #161616;
  }

  .tl-foot {
    display: flex;
    align-items: center;
    height: 18px;
    border-bottom: 1px solid #4a4440;
    color: #aaa;
  }

  .foot-icons {
    display: flex;
    width: 101px;
    gap: 3px;
    padding-left: 6px;
  }

  .foot-icons button {
    width: 16px;
    height: 16px;
  }

  .foot-icons .pressed {
    background: #181818;
  }

  .render {
    width: 188px;
  }

  .render i {
    color: #5a5a5a;
  }

  .toggle {
    width: 207px;
    height: 15px;
    border: 1px solid #161616;
    box-sizing: border-box;
  }

  .zoomer {
    display: flex;
    align-items: center;
    gap: 11px;
    margin-left: 140px;
  }

  .zoomer input {
    appearance: none;
    width: 48px;
    height: 2px;
    background: #484848;
  }

  .zoomer input::-webkit-slider-thumb {
    appearance: none;
    box-sizing: border-box;
    width: 10px;
    height: 10px;
    border: 2px solid #aaa;
    border-radius: 5px;
    background: #232323;
  }

  /* taskbar */
  .taskbar {
    display: grid;
    grid-template-columns: 1fr auto 1fr;
    align-items: center;
    height: 48px;
    flex: none;
    background: linear-gradient(90deg, #1b242b, #262615 11%, #361f17 18%, #35221a 45%, #33211a 52%, #232612 59%, #2d2414 66%, #36201a 80%, #2c2616 88%, #302617);
    color: #fff;
    line-height: 16px;
  }

  .weather {
    justify-self: start;
    gap: 5px;
    padding-left: 19px;
    text-align: left;
  }

  .weather i {
    color: #ccc;
  }

  .cloud {
    position: relative;
  }

  .cloud b {
    position: absolute;
    top: -5px;
    left: 11px;
    width: 16px;
    border-radius: 8px;
    background: #c42b1c;
    text-align: center;
  }

  .dock {
    display: flex;
    align-items: center;
    gap: 13px;
    padding-left: 12px;
  }

  .find {
    display: flex;
    align-items: center;
    box-sizing: border-box;
    width: 218px;
    height: 30px;
    padding: 0 6px 0 11px;
    border-radius: 15px;
    background: #f5f1ef;
    color: #555;
    font-size: 13px;
  }

  .find input {
    flex: 1;
    min-width: 0;
    padding-left: 10px;
  }

  .find input::placeholder {
    color: #555;
    opacity: 1;
  }

  .apps {
    display: flex;
  }

  .app-icon {
    position: relative;
    width: 44px;
    height: 44px;
  }

  .apps .app-icon:first-child {
    width: 34px;
    justify-content: flex-start;
  }

  .app-icon.running::after {
    content: "";
    position: absolute;
    bottom: 1px;
    width: 6px;
    height: 3px;
    border-radius: 2px;
    background: #9a958f;
  }

  .tile {
    width: 22px;
    height: 22px;
    border-radius: 4px;
    font-size: 11px;
    font-weight: bold;
    line-height: 21px;
  }

  .ps {
    background: #001e36;
    color: #31a8ff;
  }

  .ae {
    background: #00005b;
    color: #b0a5ff;
  }

  .tray {
    display: flex;
    align-items: center;
    justify-self: end;
    gap: 17px;
    padding-right: 20px;
  }

  .net {
    display: flex;
    gap: 6px;
  }

  .clock-bell {
    display: flex;
    align-items: center;
    gap: 10px;
  }

  .tray time {
    text-align: right;
  }
</style>
